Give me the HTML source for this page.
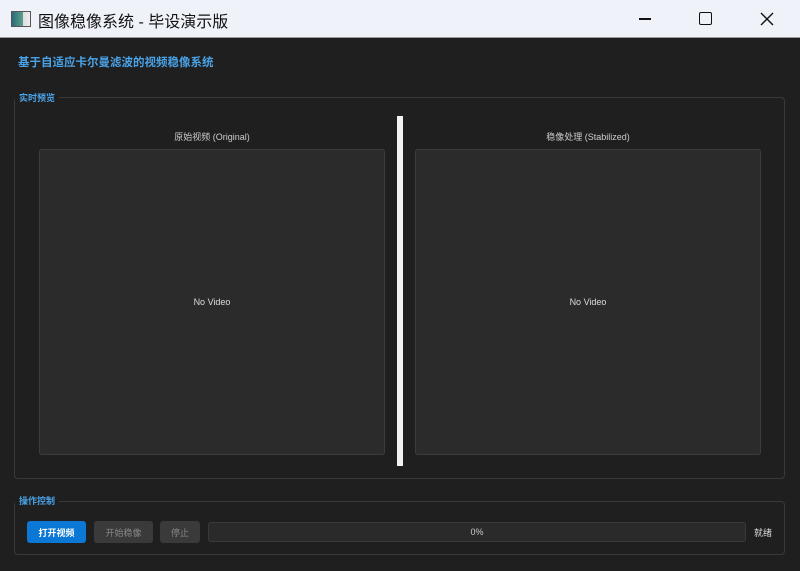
<!DOCTYPE html>
<html><head><meta charset="utf-8"><style>
*{margin:0;padding:0;box-sizing:border-box}
body{width:800px;height:571px;background:#1f1f1f;font-family:"Liberation Sans","Noto Sans CJK SC",sans-serif;position:relative;overflow:hidden;color:#ddd}
.a{position:absolute}
.title{left:0;top:0;width:800px;height:38px;background:#eff3f9;border-bottom:1px solid #999}
.box{border:1px solid #3a3a3a;border-radius:4px}
.vid{background:#2b2b2b;border:1px solid #3c3c3c;border-radius:3px;display:flex;align-items:center;justify-content:center;font-size:9px;color:#ddd}
.lbl{font-size:9px;color:#ccc;text-align:center}
.gl{font-size:9px;color:#4aa3e8;background:#1f1f1f;padding:0 4px;font-weight:bold}
.btn{font-size:9px;display:flex;align-items:center;justify-content:center;border-radius:3px}
</style></head><body>
<div class="a title">
 <div class="a" style="left:11px;top:11px;width:20px;height:16px;background:linear-gradient(90deg,#2c6a7a 0,#5aa08a 60%,#ddd 60%,#eee);border:1px solid #555"></div>
 <div class="a" style="left:38px;top:8px;font-size:16px;color:#111">图像稳像系统 - 毕设演示版</div>
 <div class="a" style="left:639px;top:18px;width:12px;height:1.5px;background:#111"></div>
 <div class="a" style="left:699px;top:12px;width:13px;height:13px;border:1.5px solid #111;border-radius:2px"></div>
 <svg class="a" style="left:760px;top:12px" width="14" height="14"><path d="M1 1L13 13M13 1L1 13" stroke="#111" stroke-width="1.4"/></svg>
</div>
<div class="a" style="left:18px;top:54px;font-size:11.5px;font-weight:bold;color:#4aa3e8">基于自适应卡尔曼滤波的视频稳像系统</div>
<div class="a box" style="left:14px;top:97px;width:771px;height:382px"></div>
<div class="a gl" style="left:15px;top:91px">实时预览</div>
<div class="a lbl" style="left:39px;top:130px;width:346px">原始视频 (Original)</div>
<div class="a lbl" style="left:415px;top:130px;width:346px">稳像处理 (Stabilized)</div>
<div class="a vid" style="left:39px;top:149px;width:346px;height:306px">No Video</div>
<div class="a vid" style="left:415px;top:149px;width:346px;height:306px">No Video</div>
<div class="a" style="left:397px;top:116px;width:6px;height:350px;background:#f2f2f2"></div>
<div class="a box" style="left:14px;top:501px;width:771px;height:54px"></div>
<div class="a gl" style="left:15px;top:494px">操作控制</div>
<div class="a btn" style="left:27px;top:521px;width:59px;height:22px;background:#0a78d4;color:#fff;font-weight:bold">打开视频</div>
<div class="a btn" style="left:94px;top:521px;width:59px;height:22px;background:#3a3a3a;color:#888">开始稳像</div>
<div class="a btn" style="left:160px;top:521px;width:40px;height:22px;background:#3a3a3a;color:#888">停止</div>
<div class="a btn" style="left:208px;top:522px;width:538px;height:20px;background:#2a2a2a;border:1px solid #3a3a3a;color:#ccc">0%</div>
<div class="a" style="left:754px;top:526px;font-size:9px;color:#ddd">就绪</div>
</body></html>
